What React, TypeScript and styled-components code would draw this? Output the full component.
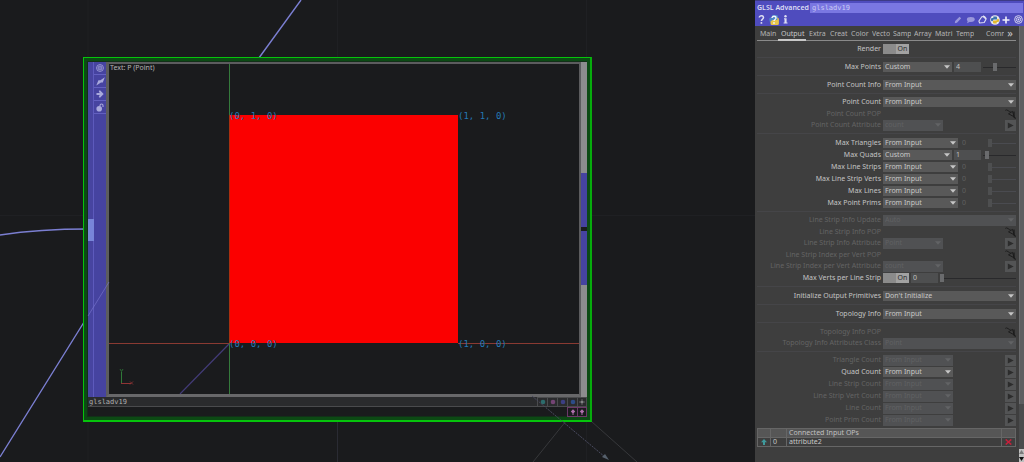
import React, { useState } from "react";
import styled, { createGlobalStyle, css } from "styled-components";

const sans = `"Noto Sans", "Open Sans", sans-serif`;
const mono = `"DejaVu Sans Mono", "Liberation Mono", monospace`;

const GlobalStyle = createGlobalStyle`
  *, *::before, *::after { box-sizing: border-box; }
  body { margin: 0; background: #1a1b1d; font: 7px/10px ${sans}; color: #c4c4c4; }
  button, input, select { font: inherit; color: inherit; margin: 0; padding: 0; border: 0; border-radius: 0; }
  button { background: none; }
`;

const Screen = styled.main`
  display: flex;
  min-height: 100vh;
`;

/* ---------- network editor ---------- */

const Network = styled.section`
  position: relative;
  flex: 1;
  min-width: 0;
  overflow: hidden;
  background: #1a1b1d;
`;

const Wires = styled.svg`
  position: absolute;
  inset: 0;
  width: 100%;
  height: 100%;
  pointer-events: none;
`;

const Node = styled.article`
  position: absolute;
  left: 83px;
  top: 57px;
  width: 509px;
  border: 1px solid #06c40c;
  border-right-color: #06ac0c;
  border-right-width: 2px;
  border-bottom-width: 2px;
  background: #1a1b1d;
  box-shadow: inset 0 0 0 3px #0c4a14, inset 0 0 0 4px #123018;
  padding: 4px 3px 3px 4px;
`;

const NodeBody = styled.div`
  display: flex;
  height: 335px;
`;

const Connector = styled.div`
  display: flex;
  align-items: center;
  width: 6px;
  background: #4744a0;
  border-right: 1px solid #5d5abc;
`;

const ConnectorSlot = styled.div`
  width: 6px;
  height: 22px;
  flex: none;
  background: #7885d8;
`;

const FlagRail = styled.div`
  display: flex;
  flex-direction: column;
  width: 12px;
  background: #4643a0;
`;

const RailButton = styled.button`
  display: grid;
  place-items: center;
  height: 13px;
  border-bottom: 1px solid #6360c0;
  color: #a9a9dc;
  svg { display: block; }
`;

const Viewport = styled.div`
  flex: 1;
  border: 3px solid #5c5c5e;
  border-top-width: 2px;
  border-bottom-color: #68686a;
  border-right-width: 2px;
  background: #1a1b1d;
  svg { display: block; width: 100%; height: 100%; }
`;

const OutputRail = styled.div`
  display: flex;
  flex-direction: column;
  gap: 4px;
  justify-content: center;
  width: 6px;
  padding-bottom: 1px;
  background: linear-gradient(#8c8c8e, #8c8c8e) top / 100% 111px no-repeat,
    linear-gradient(#8c8c8e, #8c8c8e) bottom / 100% 112px no-repeat, #1a1b1d;
`;

const OutputSlot = styled.div`
  height: 54px;
  background: #4643a0;
`;

const NodeFooter = styled.footer`
  display: flex;
  height: 10px;
  background: #2a2b2d;
  border-bottom: 1px solid #4a4b4d;
`;

const NodeName = styled.span`
  flex: 1;
  padding-left: 1px;
  font-family: ${mono};
  color: #b0b0b0;
`;

const NodeExtras = styled.div`
  display: flex;
  justify-content: flex-end;
  height: 10px;
`;

const FlagButton = styled.button<{ $edge: string; $ink: string }>`
  display: grid;
  place-items: center;
  width: 10px;
  height: 10px;
  border: 1px solid ${(p) => p.$edge};
  border-right-width: 0;
  color: ${(p) => p.$ink};
  &:last-child { border-right-width: 1px; }
  svg { display: block; }
`;

/* ---------- parameter panel ---------- */

const Panel = styled.aside`
  display: flex;
  flex-direction: column;
  width: 269px;
  flex: none;
  background: #3e3e3e;
`;

const PanelHeader = styled.header`
  padding: 2px 1px 0 2px;
  height: 26px;
  background: #4f4cbe;
  border-top: 1px solid #3d3b86;
`;

const TitleRow = styled.div`
  display: flex;
  gap: 2px;
  height: 10px;
`;

const OpType = styled.label`
  width: 51px;
  font-weight: 600;
  white-space: nowrap;
  color: #dcdcf4;
`;

const OpName = styled.input`
  flex: 1;
  min-width: 0;
  padding: 0 2px;
  height: 10px;
  font-family: ${mono};
  background: #7a77e2;
  color: #ccccf4;
`;

const IconRow = styled.div`
  display: flex;
  align-items: center;
  gap: 4px;
  height: 13px;
  padding-right: 1px;
  color: #dedef2;
`;

const IconButton = styled.button`
  display: grid;
  place-items: center;
  width: 8px;
  height: 12px;
  svg { display: block; }
`;

const Spacer = styled.div`
  flex: 1;
`;

const PanelMain = styled.div`
  display: flex;
  flex: 1;
`;

const Pages = styled.div`
  flex: 1;
  min-width: 0;
  padding: 0 3px 0 2px;
`;

const TabBar = styled.nav`
  display: flex;
  height: 15px;
  border-bottom: 1px solid #8a8a8a;
`;

const Tab = styled.button<{ $active?: boolean }>`
  width: ${(p) => (p.$active ? 28 : 21)}px;
  height: 15px;
  padding: 3px 0 0 3px;
  text-align: left;
  border-bottom: 2px solid ${(p) => (p.$active ? "#c8c8c8" : "transparent")};
  color: ${(p) => (p.$active ? "#c8c8c8" : "#b4b4b4")};
`;

const TabText = styled.span`
  display: block;
  height: 10px;
  overflow: hidden;
  white-space: nowrap;
`;

const MoreTabs = styled.button`
  width: 12px;
  font-size: 11px;
  line-height: 14px;
  color: #c4c4c4;
`;

const Group = styled.div<{ $tight?: boolean }>`
  padding: ${(p) => (p.$tight ? "2px 0" : "3px 0 2px")};
  border-top: 1px solid #454548;
  ${TabBar} + & { border-top: 0; }
`;

const Row = styled.div<{ $off?: boolean; $slim?: boolean }>`
  display: grid;
  grid-template-columns: minmax(0, 124px) minmax(0, 1fr);
  column-gap: 2px;
  align-items: center;
  height: ${(p) => (p.$slim ? 11 : 12)}px;
  color: ${(p) => (p.$off ? "#646464" : "#c4c4c4")};
`;

const RowLabel = styled.label`
  text-align: right;
  white-space: nowrap;
`;

const Controls = styled.div`
  display: flex;
  align-items: center;
  gap: 2px;
`;

const menuWidths = { full: "100%", source: "75px", custom: "69px", attribute: "60px", count: "70px" };
type MenuSize = keyof typeof menuWidths;

const MenuBox = styled.div<{ $size: MenuSize }>`
  position: relative;
  width: ${(p) => menuWidths[p.$size]};
  svg {
    position: absolute;
    right: 2px;
    top: 3px;
    pointer-events: none;
  }
`;

const Menu = styled.select`
  display: block;
  appearance: none;
  width: 100%;
  height: 10px;
  padding: 0 8px 0 2px;
  background: #595959;
  color: #c8c8c8;
  line-height: 10px;
  &:disabled {
    height: 11px;
    background: #505153;
    color: #606163;
    opacity: 1;
  }
`;

const NumberBox = styled.input<{ $off?: boolean }>`
  width: 27px;
  height: 10px;
  padding: 0 2px;
  background: ${(p) => (p.$off ? "transparent" : "#4e4f50")};
  color: ${(p) => (p.$off ? "#606060" : "#c0c0c0")};
`;

const thumb = css<{ $off?: boolean }>`
  appearance: none;
  width: 4px;
  height: 8px;
  border: 0;
  border-radius: 0;
  background: ${(p) => (p.$off ? "#4e4f50" : "#6a6b6d")};
`;

const Slider = styled.input<{ $off?: boolean }>`
  appearance: none;
  flex: 1;
  min-width: 0;
  height: 8px;
  margin-left: ${(p) => (p.$off ? "-1px" : "0")};
  background: linear-gradient(
      ${(p) => (p.$off ? "#4a4b50" : "#29292b")},
      ${(p) => (p.$off ? "#4a4b50" : "#29292b")}
    ) center / 100% 1px no-repeat;
  &::-webkit-slider-thumb { ${thumb} }
`;

const Switch = styled.label`
  position: relative;
  display: flex;
  width: 26px;
  height: 10px;
  background: #8b8b8b;
`;

const SwitchInput = styled.input`
  position: absolute;
  inset: 0;
  appearance: none;
`;

const SwitchText = styled.span`
  margin-left: auto;
  width: 13px;
  text-align: center;
  background: #a2a2a2;
  color: #2c2c2c;
`;

const SquareButton = styled.button`
  display: grid;
  place-items: center;
  width: 11px;
  height: 11px;
  margin-left: auto;
  background: #535455;
  color: #2c2c2c;
  svg { display: block; }
`;

const PickButton = styled(SquareButton)`
  background: none;
  color: #1c1c1c;
`;

const InputTable = styled.table`
  width: 100%;
  border-collapse: collapse;
  table-layout: fixed;
  th, td {
    height: 9px;
    padding: 0 2px;
    border: 1px solid #666;
    text-align: left;
    font-weight: 400;
    line-height: 8px;
  }
  th { background: #565656; color: #c0c0c0; }
  td { color: #c8c8c8; }
  svg { display: block; margin: 0 auto; }
`;

const InputCol = styled.col<{ $w?: number }>`
  width: ${(p) => (p.$w ? `${p.$w}px` : "auto")};
`;

const ScrollTrack = styled.div`
  display: flex;
  flex-direction: column;
  justify-content: space-between;
  width: 5px;
  background: #4a4b4c;
`;

const ScrollThumb = styled.div`
  height: 378px;
  background: #5d5e60;
  border-left: 1px solid #6a6b6d;
`;

const ScrollArrows = styled.div`
  display: grid;
  place-items: center;
  height: 13px;
  background: #c0c0c0;
`;

/* ---------- icons ---------- */

const Caret = ({ off }: { off?: boolean }) => (
  <svg width="6" height="4" viewBox="0 0 6 4">
    <path d="M0 .3h6L3 3.8z" fill={off ? "#626365" : "#c6c6c6"} />
  </svg>
);

const Play = () => (
  <svg width="7" height="7" viewBox="0 0 7 7">
    <path d="M.8 .5 6.7 3.500.8 6.500z" fill="currentColor" />
  </svg>
);

const Pick = () => (
  <svg width="11" height="10" viewBox="0 0 11 10" fill="none" stroke="currentColor">
    <path d="M.3 1.400Q1.500.3 3 1.600T5.500 2.400" strokeWidth=".9" />
    <path d="M3.500 4.800 7.500 2.400 9.200 7.800z" strokeWidth="1" strokeLinejoin="round" />
    <path d="M9 2.500V7.500M8.500 7.500 10.700 9.500" strokeWidth="1.200" />
  </svg>
);

const Target = ({ size }: { size: number }) => (
  <svg width={size} height={size} viewBox="0 0 10 10" fill="none" stroke="currentColor">
    <circle cx="5" cy="5" r="4.300" strokeWidth="1" />
    <circle cx="5" cy="5" r="2.400" strokeWidth="1" />
    <circle cx="5" cy="5" r="1" fill="currentColor" stroke="none" />
  </svg>
);

const Bolt = () => (
  <svg width="9" height="9" viewBox="0 0 9 9" fill="currentColor">
    <path d="M8.800.2 6.800 5.600 5 5.600.3 8.600 2.400 3.200 4.400 3.200z" />
  </svg>
);

const Arrow = () => (
  <svg width="8" height="8" viewBox="0 0 8 8" fill="currentColor">
    <path d="M.5 3h3.200L2.700 1 4 .3 7.700 4 4 7.700 2.700 7l1-2H.5z" />
  </svg>
);

const Lock = () => (
  <svg width="8" height="9" viewBox="0 0 8 9">
    <circle cx="3.200" cy="5.700" r="2.800" fill="currentColor" />
    <path d="M4 3.500V2.500a1.500 1.500 0 0 1 3 0V4" fill="none" stroke="currentColor" strokeWidth="1.100" />
  </svg>
);

const Dot = () => (
  <svg width="6" height="6" viewBox="0 0 6 6">
    <circle cx="3" cy="3" r="2.300" fill="currentColor" />
  </svg>
);

const Spark = () => (
  <svg width="8" height="8" viewBox="0 0 8 8">
    <path d="M4 1.300v5.400M1.300 4h5.400" stroke="currentColor" strokeWidth=".8" />
    <circle cx="4" cy="4" r="1.100" fill="currentColor" />
  </svg>
);

const Diamond = () => (
  <svg width="8" height="8" viewBox="0 0 8 8">
    <path d="M4 1.200 6.200 3.600 4 5.800 1.800 3.600zM3.500 5.200h1v1.800h-1z" fill="currentColor" />
  </svg>
);

const Help = () => (
  <svg width="7" height="9" viewBox="0 0 7 9" fill="none" stroke="currentColor">
    <path d="M1.300 2.600c0-2.400 4.200-2.400 4.200 0C5.500 4.200 3.400 4 3.400 6" strokeWidth="1.500" />
    <circle cx="3.400" cy="7.900" r=".95" fill="currentColor" stroke="none" />
  </svg>
);

const PythonHelp = () => (
  <svg width="10" height="10" viewBox="0 0 10 10">
    <path d="M3 0h4.500a1.500 1.500 0 0 1 1.500 1.500V5H4L2.500 7H1.500Q.3 7 .3 5V4q0-1.500 1.500-1.500H3z" fill="#4d87c8" />
    <path d="M7.500 10H3A1.500 1.500 0 0 1 1.500 8.500V6.500L3.500 5h4.800V2.500q1.600 0 1.600 2v4q0 1.500-1.500 1.500z" fill="#e8c64a" />
    <path d="M3 3c0-2.300 4-2.300 4 0 0 1.500-2 1.400-2 3" fill="none" stroke="#f4f4fa" strokeWidth="1.400" />
    <circle cx="5" cy="8" r=".9" fill="#f4f4fa" />
  </svg>
);

const Info = () => (
  <svg width="5" height="9" viewBox="0 0 5 9" fill="currentColor">
    <circle cx="2.500" cy="1.300" r="1.200" />
    <path d="M1 3.300h2.600v4.200h.9v1H.6v-1h.9V4.300H1z" />
  </svg>
);

const Pencil = () => (
  <svg width="8" height="8" viewBox="0 0 8 8">
    <path d="M5.500.8 7.200 2.300 3 6.700.8 7.200 1.200 5z" fill="#9a98dc" />
  </svg>
);

const Comment = () => (
  <svg width="9" height="8" viewBox="0 0 9 8">
    <ellipse cx="4.800" cy="3.500" rx="3.900" ry="2.400" fill="#9a98dc" />
    <path d="M2 4.500 1 7.300 4.500 5.500z" fill="#9a98dc" />
  </svg>
);

const Tag = () => (
  <svg width="9" height="9" viewBox="0 0 9 9" fill="none" stroke="currentColor" strokeWidth="1.100">
    <path d="M3.800 1.800 6.600 1.600 8 4.200 6.200 7.600 1.600 8 .9 6z" />
    <path d="M5 .9 8.200 3.800" strokeWidth="1.800" />
  </svg>
);

const Python = () => (
  <svg width="10" height="10" viewBox="0 0 10 10">
    <circle cx="5" cy="5" r="4.800" fill="#e9e9ee" />
    <path d="M3.300 1.500h2.700q1 0 1 1v2H3.500L2.500 6.300H2Q1 6.200 1 5V4q0-1 1.200-1h1.100z" fill="#3b74ad" />
    <path d="M6.700 8.500H4q-1 0-1-1v-2h3.500l1-1.800H8q1 .1 1 1.300v1q0 1-1.200 1H6.700z" fill="#e3b92e" />
  </svg>
);

const Plus = () => (
  <svg width="8" height="8" viewBox="0 0 8 8">
    <path d="M4 .5v7M.5 4h7" stroke="#f0f0fa" strokeWidth="1.600" />
  </svg>
);

/* ---------- pieces ---------- */

const OpViewer = () => (
  <Viewport>
    <svg viewBox="0 0 470 330" preserveAspectRatio="xMinYMin slice" role="img" aria-label="Point positions">
      <path d="M120.500 0V330" stroke="#357a3c" />
      <path d="M0 279.500H120" stroke="#8a3a32" />
      <path d="M349 279.500H470" stroke="#8a3a32" />
      <path d="M120 280 71 330" stroke="#433b78" strokeWidth="1.200" />
      <rect x="120" y="51" width="229" height="228" fill="#fb0000" />
      <path d="M120.500 51V279" stroke="#a83010" />
      <path d="M12.500 308v11" stroke="#2f7a38" />
      <path d="M12 319.500h10" stroke="#903434" />
      <path d="M11 305l1.500 2.500 1.500-2.500" stroke="#2f7a38" fill="none" strokeWidth=".8" />
      <path d="M21 317.500l3 3m0-3-3 3" stroke="#903434" fill="none" strokeWidth=".8" />
      <g fontFamily="DejaVu Sans Mono, monospace" fontSize="9" fill="#2478b4">
        <text x="120" y="55">(0, 1, 0)</text>
        <text x="349" y="55">(1, 1, 0)</text>
        <text x="120" y="283">(0, 0, 0)</text>
        <text x="349" y="283">(1, 0, 0)</text>
      </g>
      <text x="1" y="6" fontFamily="Noto Sans, sans-serif" fontSize="7" fill="#b4b4b4">Text: P (Point)</text>
    </svg>
  </Viewport>
);

const footerFlags = [
  { name: "Viewer", ink: "#2c6c6c" },
  { name: "Render", ink: "#744474" },
  { name: "Display", ink: "#3c3f84" },
  { name: "Select", ink: "#2c4c88" },
];

const GlslNode = () => (
  <Node>
    <NodeBody>
      <Connector><ConnectorSlot /></Connector>
      <FlagRail>
        <RailButton aria-label="View"><Target size={8} /></RailButton>
        <RailButton aria-label="Bypass"><Bolt /></RailButton>
        <RailButton aria-label="Cook"><Arrow /></RailButton>
        <RailButton aria-label="Lock"><Lock /></RailButton>
      </FlagRail>
      <OpViewer />
      <OutputRail><OutputSlot /><OutputSlot /></OutputRail>
    </NodeBody>
    <NodeFooter>
      <NodeName>glsladv19</NodeName>
      {footerFlags.map((f) => (
        <FlagButton key={f.name} aria-label={f.name} $edge="#4a4b4d" $ink={f.ink}><Dot /></FlagButton>
      ))}
      <FlagButton aria-label="Activate" $edge="#4a4b4d" $ink="#8a8a8c"><Spark /></FlagButton>
    </NodeFooter>
    <NodeExtras>
      <FlagButton aria-label="Dock" $edge="#6c3868" $ink="#b070ac"><Diamond /></FlagButton>
      <FlagButton aria-label="Undock" $edge="#6c3868" $ink="#b070ac"><Diamond /></FlagButton>
    </NodeExtras>
  </Node>
);

type Param = {
  label: string;
  off?: boolean;
  menu?: string;
  size?: MenuSize;
  toggle?: boolean;
  value?: string;
  slider?: number;
  pick?: boolean;
  play?: boolean;
};

const limit = (label: string): Param => ({ label, menu: "From Input", size: "source", value: "0", slider: 0 });
const count = (label: string, off = true): Param => ({ label, off, menu: "From Input", size: "count", play: true });
const pop = (label: string): Param => ({ label, off: true, pick: true });
const attribute = (label: string, menu: string): Param => ({ label, off: true, menu, size: "attribute", play: true });

const groups: { tight?: boolean; params: Param[] }[] = [
  { tight: true, params: [{ label: "Render", toggle: true }] },
  { params: [{ label: "Max Points", menu: "Custom", size: "custom", value: "4", slider: 36 }] },
  { params: [{ label: "Point Count Info", menu: "From Input", size: "full" }] },
  {
    tight: true,
    params: [
      { label: "Point Count", menu: "From Input", size: "full" },
      pop("Point Count POP"),
      attribute("Point Count Attribute", "count"),
    ],
  },
  {
    params: [
      limit("Max Triangles"),
      { label: "Max Quads", menu: "Custom", size: "custom", value: "1", slider: 8 },
      limit("Max Line Strips"),
      limit("Max Line Strip Verts"),
      limit("Max Lines"),
      limit("Max Point Prims"),
    ],
  },
  {
    tight: true,
    params: [
      { label: "Line Strip Info Update", off: true, menu: "Auto", size: "full" },
      pop("Line Strip Info POP"),
      attribute("Line Strip Info Attribute", "Point"),
      pop("Line Strip Index per Vert POP"),
      attribute("Line Strip Index per Vert Attribute", "count"),
      { label: "Max Verts per Line Strip", toggle: true, value: "0", slider: 0 },
    ],
  },
  { params: [{ label: "Initialize Output Primitives", menu: "Don't Initialize", size: "full" }] },
  { params: [{ label: "Topology Info", menu: "From Input", size: "full" }] },
  {
    params: [
      pop("Topology Info POP"),
      { label: "Topology Info Attributes Class", off: true, menu: "Point", size: "full" },
    ],
  },
  {
    tight: true,
    params: [
      count("Triangle Count"),
      count("Quad Count", false),
      count("Line Strip Count"),
      count("Line Strip Vert Count"),
      count("Line Count"),
      count("Point Prim Count"),
    ],
  },
];

const ParamRow = ({ p }: { p: Param }) => {
  const id = p.label.toLowerCase().replace(/ /g, "-");
  const idle = p.size === "source";
  const [on, setOn] = useState(true);
  return (
    <Row $off={p.off} $slim={p.pick}>
      <RowLabel htmlFor={id}>{p.label}</RowLabel>
      <Controls>
        {p.toggle && (
          <Switch>
            <SwitchInput id={id} type="checkbox" checked={on} onChange={() => setOn(!on)} />
            <SwitchText>{on ? "On" : "Off"}</SwitchText>
          </Switch>
        )}
        {p.menu && (
          <MenuBox $size={p.size ?? "full"}>
            <Menu id={id} disabled={p.off}><option>{p.menu}</option></Menu>
            <Caret off={p.off} />
          </MenuBox>
        )}
        {p.value && <NumberBox aria-label={`${p.label} value`} defaultValue={p.value} $off={idle} />}
        {p.slider !== undefined && (
          <Slider type="range" aria-label={`${p.label} slider`} defaultValue={p.slider} $off={idle} />
        )}
        {p.pick && <PickButton id={id} aria-label={p.label}><Pick /></PickButton>}
        {p.play && <SquareButton aria-label={`${p.label} options`}><Play /></SquareButton>}
      </Controls>
    </Row>
  );
};

const tabs = ["Main", "Output", "Extra", "Creat", "Color", "Vecto", "Samp", "Array", "Matri", "Temp"];

export default function App() {
  return (
    <Screen>
      <GlobalStyle />
      <Network>
        <Wires aria-hidden="true">
          <path d="M88 0V462M337.500 0V462M586.500 0V462M0 215.500H755" stroke="#1f2023" fill="none" />
          <path d="M337.500 397V462" stroke="#2a2b33" />
          <path d="M0 235Q40 229 88 229" stroke="#7b7fd2" strokeWidth="1.400" fill="none" />
          <path d="M0 457 109 282M301 0 256 62" stroke="#7b7fd2" strokeWidth="1.400" />
          <path d="M566 421 533 462M591 421 637 462" stroke="#37383b" />
        </Wires>
        <GlslNode />
        <Wires aria-hidden="true">
          <path d="M88 316 109 282" stroke="#7b78d0" strokeOpacity=".6" />
          <path d="M532 396 605 457" stroke="#4a4b60" strokeDasharray="2 1" />
          <path d="M602 457l3-3 4 6z" fill="#56606c" />
        </Wires>
      </Network>
      <Panel>
        <PanelHeader>
          <TitleRow>
            <OpType htmlFor="op-name">GLSL Advanced</OpType>
            <OpName id="op-name" defaultValue="glsladv19" />
          </TitleRow>
          <IconRow>
            <IconButton aria-label="Help"><Help /></IconButton>
            <IconButton aria-label="Python help"><PythonHelp /></IconButton>
            <IconButton aria-label="Info"><Info /></IconButton>
            <Spacer />
            <IconButton aria-label="Edit"><Pencil /></IconButton>
            <IconButton aria-label="Comment"><Comment /></IconButton>
            <IconButton aria-label="Tags"><Tag /></IconButton>
            <IconButton aria-label="Language"><Python /></IconButton>
            <IconButton aria-label="Add"><Plus /></IconButton>
            <IconButton aria-label="View"><Target size={9} /></IconButton>
          </IconRow>
        </PanelHeader>
        <PanelMain>
          <Pages>
            <TabBar>
              {tabs.map((t) => (
                <Tab key={t} $active={t === "Output"}><TabText>{t}</TabText></Tab>
              ))}
              <Spacer />
              <Tab><TabText>Comm</TabText></Tab>
              <MoreTabs aria-label="More pages">»</MoreTabs>
            </TabBar>
            {groups.map((g, i) => (
              <Group key={i} $tight={g.tight}>
                {g.params.map((p) => <ParamRow key={p.label} p={p} />)}
              </Group>
            ))}
            <InputTable>
              <colgroup><InputCol $w={13} /><InputCol $w={16} /><InputCol /><InputCol $w={14} /></colgroup>
              <thead>
                <tr><th /><th /><th>Connected Input OPs</th><th /></tr>
              </thead>
              <tbody>
                <tr>
                  <td>
                    <svg width="6" height="6" viewBox="0 0 6 6">
                      <path d="M3 0 6 3.300H4V6H2V3.300H0z" fill="#3f9a9c" />
                    </svg>
                  </td>
                  <td>0</td>
                  <td>attribute2</td>
                  <td>
                    <svg width="7" height="6" viewBox="0 0 7 6">
                      <path d="M.7.400 6.300 5.600M6.300.400.7 5.600" stroke="#c8203c" strokeWidth="1.400" />
                    </svg>
                  </td>
                </tr>
              </tbody>
            </InputTable>
          </Pages>
          <ScrollTrack>
            <ScrollThumb />
            <ScrollArrows>
              <svg width="5" height="11" viewBox="0 0 5 11">
                <path d="M2.500 0 5 4H0z" fill="#7a7a7a" />
                <path d="M2.500 11 5 7H0z" fill="#111" />
              </svg>
            </ScrollArrows>
          </ScrollTrack>
        </PanelMain>
      </Panel>
    </Screen>
  );
}
